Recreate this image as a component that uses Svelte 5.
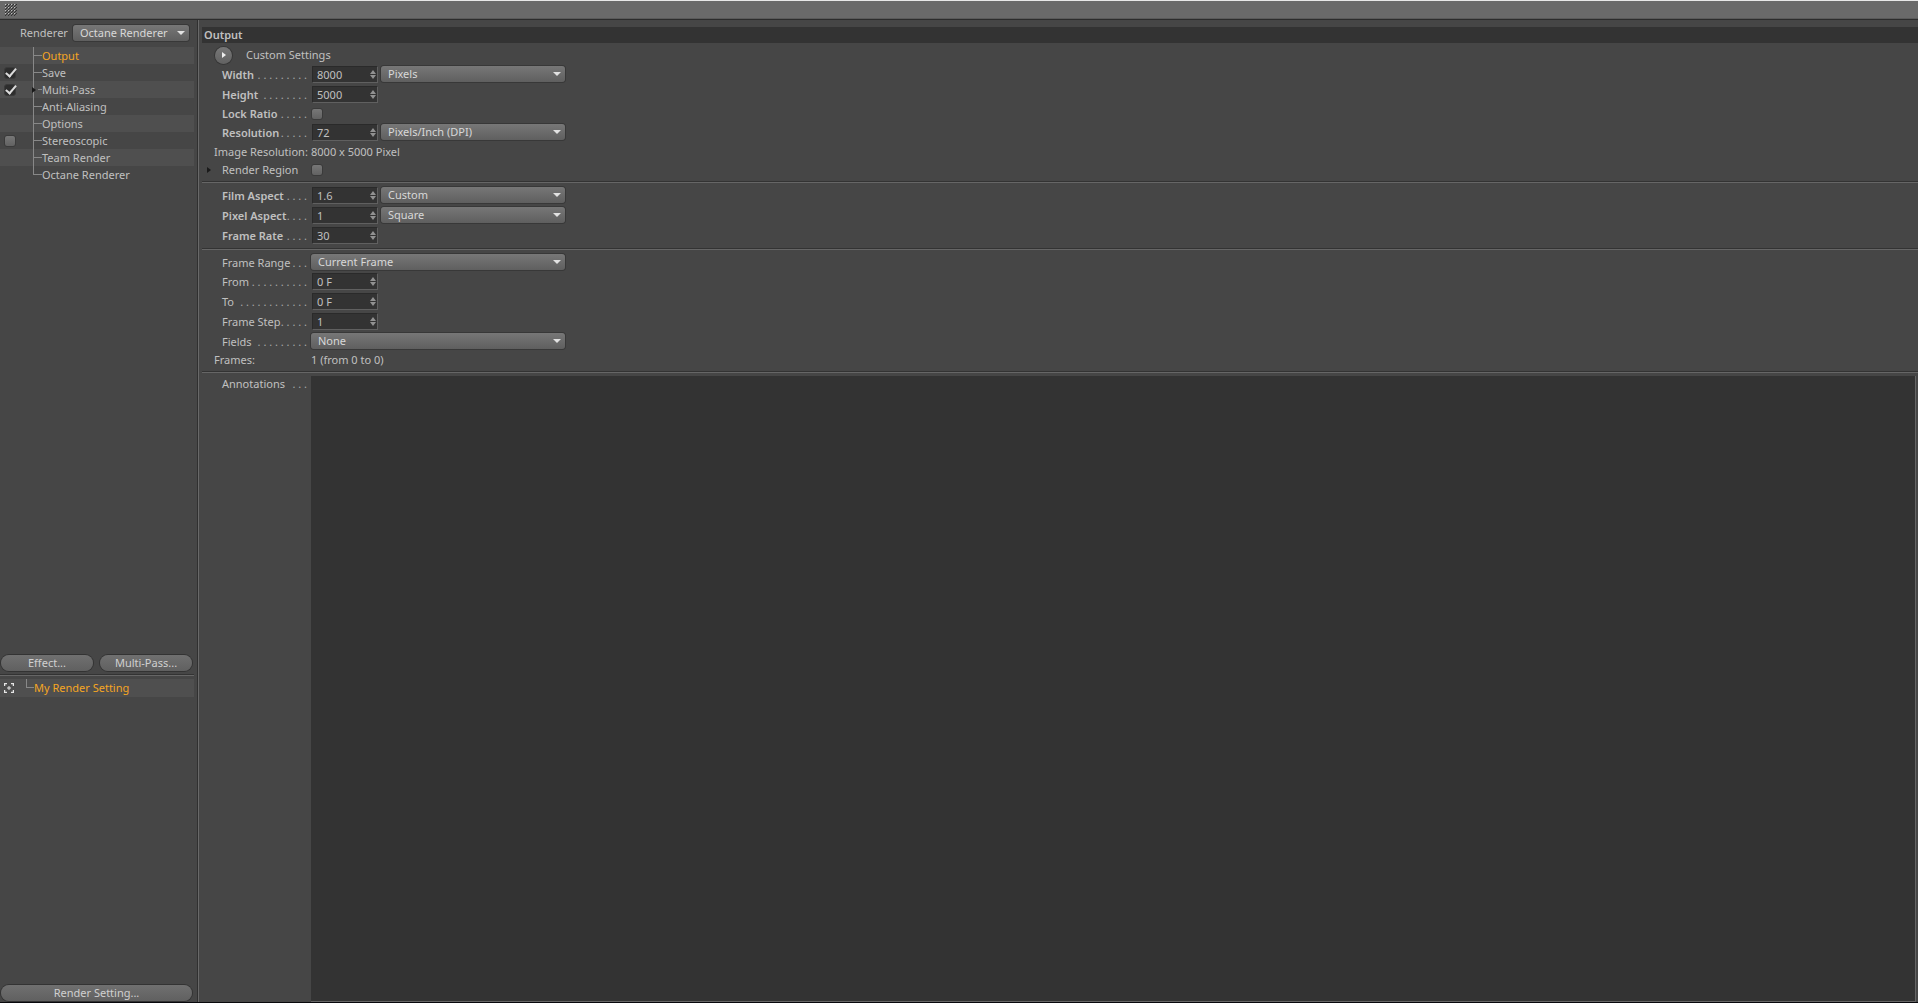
<script lang="ts">
  type TreeItem = {
    name: string
    checked?: boolean
    expandable?: boolean
  }

  type Field = {
    id: string
    label: string
    dots?: number
    bold?: boolean
    value?: string
    checkbox?: boolean
    options?: string[]
    text?: string
    arrow?: boolean
  }

  const tree: TreeItem[] = $state([
    { name: 'Output' },
    { name: 'Save', checked: true },
    { name: 'Multi-Pass', checked: true, expandable: true },
    { name: 'Anti-Aliasing' },
    { name: 'Options' },
    { name: 'Stereoscopic', checked: false },
    { name: 'Team Render' },
    { name: 'Octane Renderer' },
  ])

  const groups: Field[][] = [
    [
      { id: 'width', label: 'Width', dots: 9, bold: true, value: '8000', options: ['Pixels', 'cm', 'mm', 'Inch'] },
      { id: 'height', label: 'Height', dots: 8, bold: true, value: '5000' },
      { id: 'lock', label: 'Lock Ratio', dots: 5, bold: true, checkbox: true },
      { id: 'resolution', label: 'Resolution', dots: 5, bold: true, value: '72', options: ['Pixels/Inch (DPI)', 'Pixels/cm'] },
      { id: 'image', label: 'Image Resolution:', text: '8000 x 5000 Pixel' },
      { id: 'region', label: 'Render Region', checkbox: true, arrow: true },
    ],
    [
      { id: 'film', label: 'Film Aspect', dots: 4, bold: true, value: '1.6', options: ['Custom', 'Square (1:1)', 'HDTV (16:9)'] },
      { id: 'pixel', label: 'Pixel Aspect', dots: 4, bold: true, value: '1', options: ['Square', 'Custom'] },
      { id: 'rate', label: 'Frame Rate', dots: 4, bold: true, value: '30' },
    ],
    [
      { id: 'range', label: 'Frame Range', dots: 3, options: ['Current Frame', 'Manual', 'All Frames'] },
      { id: 'from', label: 'From', dots: 10, value: '0 F' },
      { id: 'to', label: 'To', dots: 12, value: '0 F' },
      { id: 'step', label: 'Frame Step', dots: 5, value: '1' },
      { id: 'fields', label: 'Fields', dots: 9, options: ['None', 'Even Field First', 'Odd Field First'] },
      { id: 'frames', label: 'Frames:', text: '1 (from 0 to 0)' },
    ],
  ]

  let selected = $state('Output')
</script>

{#snippet dropdown(id: string, label: string, options: string[])}
  <span class="dropdown">
    <select {id} aria-label={label}>
      {#each options as option}
        <option>{option}</option>
      {/each}
    </select>
  </span>
{/snippet}

{#snippet leader(count: number)}
  <span class="leader" aria-hidden="true">{'. '.repeat(count).trim()}</span>
{/snippet}

<div class="window">
  <div class="toolbar">
    <svg width="12" height="12" viewBox="0 0 12 12" aria-hidden="true">
      <defs>
        <pattern id="grip" width="3" height="3" patternUnits="userSpaceOnUse">
          <path d="M0 2h1v1h-1zM1 1h1v1h-1zM2 0h1v1h-1z" fill="#333" />
          <path d="M0 0h1v1h-1z" fill="#c0c0c0" />
        </pattern>
      </defs>
      <rect width="12" height="12" fill="url(#grip)" />
    </svg>
  </div>

  <div class="body">
    <aside>
      <div class="upper">
        <div class="renderer">
          <label for="renderer">Renderer</label>
          {@render dropdown('renderer', 'Renderer', ['Octane Renderer', 'Standard', 'Physical'])}
        </div>

        <ul class="tree">
          {#each tree as item}
            <li>
              <span class="tick">
                {#if item.checked !== undefined}
                  <input type="checkbox" aria-label={item.name} bind:checked={item.checked} />
                {/if}
              </span>
              <span class="branch">
                {#if item.expandable}
                  <i class="triangle"></i>
                {/if}
              </span>
              <button class="node" class:selected={selected === item.name} onclick={() => (selected = item.name)}>{item.name}</button>
            </li>
          {/each}
        </ul>

        <div class="buttons">
          <button class="pill">Effect...</button>
          <button class="pill">Multi-Pass...</button>
        </div>
      </div>
      <hr />
      <div class="lower">
        <div class="setting">
          <svg width="10" height="10" viewBox="0 0 10 10" aria-hidden="true">
            <path d="M.5 3V.5H3M7 .5h2.500V3M9.500 7v2.500H7M3 9.500H.5V7" fill="none" stroke="#e6e6e6" stroke-width="1.500" />
            <path d="M5 3v4M3 5h4" stroke="#e6e6e6" />
          </svg>
          <span class="elbow"></span>
          <button class="node selected">My Render Setting</button>
        </div>
        <div class="buttons">
          <button class="pill">Render Setting...</button>
        </div>
      </div>
    </aside>

    <main>
      <h1>Output</h1>
      <div class="custom">
        <button class="round" aria-label="Custom Settings"><i class="triangle"></i></button>
        <span>Custom Settings</span>
      </div>

      {#each groups as fields}
        <section>
          {#each fields as field}
            <div class="row" class:edit={field.value} class:choice={field.options && !field.value}>
              <span class="label" class:bold={field.bold} class:outdent={field.text}>
                {#if field.arrow}
                  <i class="triangle"></i>
                {/if}
                {#if field.text}
                  <span>{field.label}</span>
                {:else}
                  <label for={field.id}>{field.label}</label>
                {/if}
                {#if field.dots}
                  {@render leader(field.dots)}
                {/if}
              </span>
              {#if field.value}
                <span class="number">
                  <input id={field.id} type="text" value={field.value} />
                  <svg width="6" height="9" viewBox="0 0 6 9" aria-hidden="true">
                    <path d="M3 0L6 4H0zM3 9L0 5h6z" fill="#929292" />
                  </svg>
                </span>
                {#if field.options}
                  {@render dropdown(field.id + '-unit', field.label + ' preset', field.options)}
                {/if}
              {:else if field.options}
                {@render dropdown(field.id, field.label, field.options)}
              {:else if field.checkbox}
                <input id={field.id} type="checkbox" />
              {:else}
                <span>{field.text}</span>
              {/if}
            </div>
          {/each}
        </section>
        <hr />
      {/each}

      <div class="annotations">
        <span class="label">
          <label for="annotations">Annotations</label>
          {@render leader(3)}
        </span>
        <textarea id="annotations"></textarea>
      </div>
    </main>
  </div>
</div>

<style>
  :global(body) {
    background-color: #464646;
  }
  .window {
    display: flex;
    flex-direction: column;
    box-sizing: border-box;
    height: 100vh;
    border-top: 1px solid #e8e8e8;
    border-bottom: 1px solid #08080c;
    color: #c0c0c0;
    font-family: "Noto Sans", "Open Sans", sans-serif;
    font-size: 11px;
    line-height: 16px;
  }
  button,
  input,
  select,
  textarea {
    box-sizing: border-box;
    margin: 0;
    font: inherit;
    color: inherit;
  }
  .toolbar {
    height: 18px;
    padding: 3px 5px;
    box-sizing: border-box;
    background-color: #6a6a6a;
    border-bottom: 1px solid #5a5a5a;
    svg {
      display: block;
    }
  }
  .body {
    flex: 1;
    min-height: 0;
    display: grid;
    grid-template-columns: 199px 1fr;
    border-top: 1px solid #2c2c2c;
  }
  hr {
    align-self: stretch;
    height: 1px;
    margin: 2px 0 3px;
    border: 0;
    border-top: 1px solid #333;
    background-color: #666;
  }
  aside {
    display: flex;
    flex-direction: column;
    box-sizing: border-box;
    padding: 5px 4px 0 0;
    border-right: 1px solid #696969;
    box-shadow: inset -1px 0 #303030;
  }
  .upper,
  .lower {
    display: flex;
    flex-direction: column;
    flex: 1 0 0;
    .buttons {
      margin-top: auto;
    }
  }
  .upper {
    flex-grow: 2;
  }
  .renderer {
    display: flex;
    gap: 5px;
    padding: 0 5px 6px 20px;
    label {
      flex: 1;
    }
    .dropdown {
      width: 118px;
    }
  }
  .dropdown {
    position: relative;
    display: flex;
    &::after {
      content: '';
      position: absolute;
      right: 4px;
      top: 6px;
      border: 4px solid transparent;
      border-top-color: #e2e2e2;
      border-bottom: 0;
      pointer-events: none;
    }
    select {
      appearance: none;
      width: 100%;
      height: 16px;
      padding: 0 14px 0 7px;
      border: 0;
      border-radius: 3px;
      background: linear-gradient(#777, #5f5f5f);
      box-shadow: 0 0 0 1px #383838;
      line-height: 16px;
      color: #d8d8d8;
    }
    option {
      background-color: #5f5f5f;
    }
  }
  .tree {
    margin: 0;
    padding: 0;
    list-style: none;
    li {
      display: flex;
      align-items: center;
      height: 17px;
      &:nth-child(odd) {
        background-color: #4f4f4f;
      }
      &:last-child .branch {
        background: linear-gradient(#888, #888) 0 0 / 1px 9px no-repeat;
      }
    }
  }
  .tick {
    display: flex;
    width: 29px;
    padding-left: 4px;
  }
  .branch {
    display: flex;
    align-items: center;
    width: 9px;
    height: 17px;
    background: linear-gradient(#888, #888) 0 0 / 1px 100% no-repeat;
    &::after {
      content: '';
      flex: 1;
      height: 1px;
      background-color: #888;
    }
    .triangle {
      margin: 0 2px 0 -1px;
    }
  }
  .node {
    padding: 0;
    border: 0;
    background: none;
    line-height: 17px;
    &.selected {
      color: #f5a623;
    }
  }
  .triangle {
    width: 0;
    height: 0;
    border: 3px solid transparent;
    border-left: 4px solid #1a1a1a;
    border-right: 0;
  }
  input[type='checkbox'] {
    appearance: none;
    width: 12px;
    height: 12px;
    border: 1px solid #3a3a3a;
    border-radius: 3px;
    background: linear-gradient(#777, #626262);
    &:checked {
      background: #2d2d2d;
    }
    &:checked::after {
      content: '';
      display: block;
      box-sizing: border-box;
      width: 6px;
      height: 11px;
      margin: -2px 0 0 3px;
      border: solid #dcdcdc;
      border-width: 0 2px 2px 0;
      transform: rotate(40deg);
    }
  }
  .buttons {
    display: flex;
    gap: 7px;
    padding: 0 2px 0 1px;
  }
  .pill {
    flex: 1;
    height: 16px;
    margin-bottom: 1px;
    padding: 0;
    border: 0;
    border-radius: 8px;
    background: linear-gradient(#707070, #606060);
    box-shadow: 0 0 0 1px #333;
    line-height: 16px;
    color: #d0d0d0;
  }
  .setting {
    display: flex;
    align-items: center;
    height: 18px;
    padding-left: 4px;
    background-color: #4f4f4f;
    .elbow {
      align-self: flex-start;
      width: 7px;
      height: 8px;
      margin-left: 12px;
      border: solid #888;
      border-width: 0 0 1px 1px;
    }
  }
  main {
    display: flex;
    flex-direction: column;
    min-width: 0;
    padding: 7px 0 0 3px;
  }
  h1 {
    margin: 0 0 2px;
    padding-left: 2px;
    height: 16px;
    background-color: #333;
    font-size: 11px;
    line-height: 16px;
    font-weight: 600;
  }
  .custom {
    display: flex;
    align-items: center;
    gap: 14px;
    height: 20px;
    padding-left: 13px;
  }
  .round {
    display: grid;
    place-content: center;
    width: 17px;
    height: 17px;
    padding: 0;
    border: 0;
    border-radius: 50%;
    background: linear-gradient(#777, #626262);
    box-shadow: 0 0 0 1px #363636;
    .triangle {
      border-left-color: #eee;
    }
  }
  .row {
    display: flex;
    align-items: center;
    height: 18px;
    &.edit {
      height: 20px;
    }
    &.choice {
      height: 19px;
    }
    .dropdown {
      width: 254px;
      margin-bottom: 2px;
    }
    .number + .dropdown {
      width: 184px;
      margin-left: 3px;
    }
  }
  .label {
    position: relative;
    display: flex;
    flex: none;
    box-sizing: border-box;
    width: 109px;
    padding: 0 4px 0 20px;
    white-space: nowrap;
    &.bold label {
      font-weight: 600;
    }
    &.outdent {
      padding-left: 12px;
    }
    .triangle {
      position: absolute;
      left: 5px;
      top: 5px;
    }
  }
  .leader {
    margin-left: auto;
    color: #a8a8a8;
  }
  .number {
    position: relative;
    width: 66px;
    margin: 0 0 1px 1px;
    input {
      display: block;
      width: 100%;
      height: 17px;
      padding: 0 14px 0 4px;
      border: 1px solid #2a2a2a;
      border-right-color: #606060;
      border-bottom-color: #606060;
      background-color: #333;
      line-height: 15px;
    }
    svg {
      position: absolute;
      right: 2px;
      top: 4px;
    }
  }
  .annotations {
    flex: 1;
    display: flex;
    min-height: 0;
    padding-right: 2px;
    textarea {
      flex: 1;
      border: 0;
      border-right: 1px solid #666;
      border-bottom: 1px solid #666;
      background-color: #333;
      resize: none;
      outline: none;
    }
  }
</style>
